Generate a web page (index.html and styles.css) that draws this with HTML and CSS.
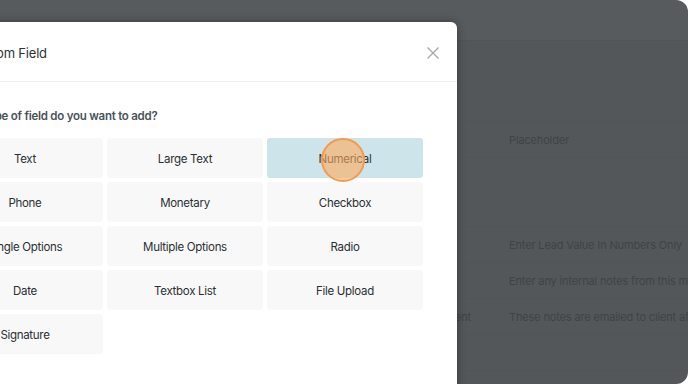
FILE: index.html
```html
<html>
<head>
    <title>Add Custom Field</title>
    <link rel="stylesheet" href="styles.css">
</head>
<body>
    <div class="app">
        <div class="topbar"></div>

        <!-- Lead form rows behind the modal -->
        <div class="form">
            <div class="row row-tall"></div>
            <div class="row"><div class="label">Label</div><div class="value">Placeholder</div></div>
            <div class="row row-big"></div>
            <div class="row"><div class="label">Value</div><div class="value">Enter Lead Value In Numbers Only</div></div>
            <div class="row"><div class="label">Notes</div><div class="value">Enter any internal notes from this meeting</div></div>
            <div class="row"><div class="label">Notes For Client</div><div class="value">These notes are emailed to client after the meeting</div></div>
            <div class="row"></div>
            <div class="row"><div class="label">Date</div><div class="value">Change The Date</div></div>
        </div>

        <div class="overlay"></div>
    </div>

    <div class="modal">
        <div class="modal-header">
            <span class="modal-title">Add Custom Field</span>
            <svg class="close" width="14" height="14" viewBox="0 0 14 14">
                <path d="M1.5 1.5 L12.5 12.5 M12.5 1.5 L1.5 12.5" stroke="#a3a7ab" stroke-width="1.3" fill="none"/>
            </svg>
        </div>
        <div class="modal-body">
            <div class="question">What type of field do you want to add?</div>
            <div class="field-grid">
                <div class="field-type">Text</div>
                <div class="field-type">Large Text</div>
                <div class="field-type selected">Numerical</div>
                <div class="field-type">Phone</div>
                <div class="field-type">Monetary</div>
                <div class="field-type">Checkbox</div>
                <div class="field-type">Single Options</div>
                <div class="field-type">Multiple Options</div>
                <div class="field-type">Radio</div>
                <div class="field-type">Date</div>
                <div class="field-type">Textbox List</div>
                <div class="field-type">File Upload</div>
                <div class="field-type">Signature</div>
            </div>
        </div>
    </div>

    <div class="click-dot"></div> <!-- click highlight -->
</body>
</html>
```

FILE: styles.css
```css
body {
    margin: 0;
    width: 688px;
    height: 384px;
    overflow: hidden;
    background-color: #ffffff;
    font-family: 'Inter', 'Noto Sans', sans-serif;
    position: relative;
}

.app {
    width: 688px;
    height: 384px;
    background-color: #e8eaeb;
    border-radius: 0 12px 12px 0; /* window corner */
    overflow: hidden;
    position: relative;
}

.topbar {
    height: 40px;
    background-color: #ffffff;
    border-bottom: 1px solid #d9dcde;
}

.row {
    display: flex;
    align-items: center;
    height: 35px;
    border-bottom: 1px solid #e0e2e4;
    font-size: 11px;
    letter-spacing: -0.15px;
    color: #838a8e;
}

.row-tall {
    height: 80px;
}

.row-big {
    height: 68px;
}

.label {
    width: 119px;
    padding-left: 390px;
    flex-shrink: 0;
    white-space: nowrap;
}

.value {
    white-space: nowrap;
}

.overlay {
    position: absolute;
    inset: 0;
    background-color: rgba(45, 50, 53, 0.8);
}

.modal {
    position: absolute;
    top: 22px;
    left: -87px;
    width: 544px;
    height: 420px;
    background-color: #ffffff;
    border-radius: 6px;
    box-shadow: 0 0 8px rgba(0, 0, 0, 0.35);
}

.modal-header {
    display: flex;
    align-items: center;
    justify-content: space-between;
    padding: 2px 17px 0 28px;
    box-sizing: border-box;
    height: 60px;
    border-bottom: 1px solid #edf0f1;
}

.modal-title {
    font-size: 13px;
    letter-spacing: -0.2px;
    color: #2d3236;
}

.modal-body {
    padding: 26px 34px 0 34px;
}

.question {
    font-size: 11.5px;
    font-weight: 600;
    letter-spacing: -0.25px;
    color: #4a5259;
    line-height: 16px;
    margin: 0 0 14px 6px;
}

.field-grid {
    display: grid;
    grid-template-columns: repeat(3, 156px);
    grid-auto-rows: 40px;
    gap: 4px;
}

.field-type {
    display: flex;
    align-items: center;
    justify-content: center;
    padding-top: 2px;
    box-sizing: border-box;
    background-color: #f8f8f8;
    border-radius: 3px;
    font-size: 11.5px;
    letter-spacing: -0.3px;
    color: #2b2f33;
}

.field-type.selected {
    background-color: #cde5ea;
}

.click-dot {
    position: absolute;
    left: 321px;
    top: 138px;
    width: 40px;
    height: 40px;
    border-radius: 50%;
    border: 2px solid #f39a4c;
    background-color: rgba(255, 170, 90, 0.6);
}
```
